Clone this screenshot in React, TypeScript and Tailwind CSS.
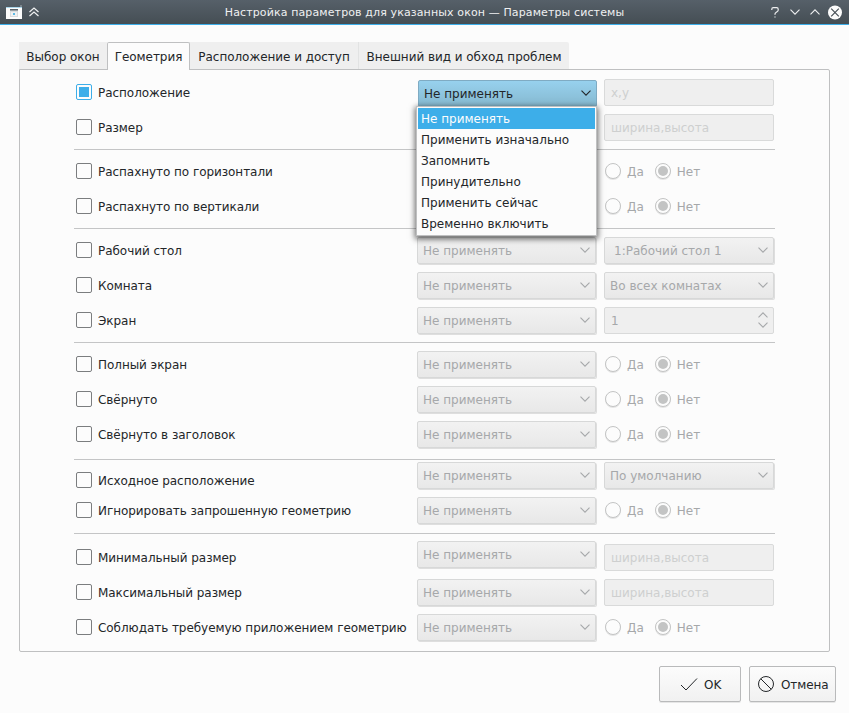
import React, { useState } from 'react';

type Value =
    | { kind: 'input'; placeholder: string }
    | { kind: 'combo'; text: string; indent?: boolean }
    | { kind: 'spin'; text: string }
    | { kind: 'radio' };

interface Rule {
    label: string;
    value: Value;
    labelClass?: string;
    comboClass?: string;
}

interface RuleGroup {
    className: string;
    rules: Rule[];
}

const TABS = [
    { label: 'Выбор окон', className: 'w-[88px]' },
    { label: 'Геометрия', className: 'w-[83px]' },
    { label: 'Расположение и доступ', className: 'w-[169px]' },
    { label: 'Внешний вид и обход проблем', className: 'w-[210px]' },
];

const POLICIES = ['Не применять', 'Применить изначально', 'Запомнить', 'Принудительно', 'Применить сейчас', 'Временно включить'];

const GROUPS: RuleGroup[] = [
    {
        className: 'pt-[9px] pb-2',
        rules: [
            { label: 'Расположение', value: { kind: 'input', placeholder: 'x,y' } },
            { label: 'Размер', value: { kind: 'input', placeholder: 'ширина,высота' } },
        ],
    },
    {
        className: 'border-t border-[#c4c5c6] py-2',
        rules: [
            { label: 'Распахнуто по горизонтали', value: { kind: 'radio' } },
            { label: 'Распахнуто по вертикали', value: { kind: 'radio' } },
        ],
    },
    {
        className: 'border-t border-[#c4c5c6] py-2',
        rules: [
            { label: 'Рабочий стол', value: { kind: 'combo', text: '1:Рабочий стол 1', indent: true } },
            { label: 'Комната', value: { kind: 'combo', text: 'Во всех комнатах' } },
            { label: 'Экран', value: { kind: 'spin', text: '1' } },
        ],
    },
    {
        className: 'border-t border-[#c4c5c6] pt-2 pb-[11px]',
        rules: [
            { label: 'Полный экран', value: { kind: 'radio' } },
            { label: 'Свёрнуто', value: { kind: 'radio' } },
            { label: 'Свёрнуто в заголовок', value: { kind: 'radio' } },
        ],
    },
    {
        className: 'border-t border-[#c4c5c6] pt-[2px] pb-[9px]',
        rules: [
            { label: 'Исходное расположение', value: { kind: 'combo', text: 'По умолчанию' }, labelClass: 'mt-[5px]' },
            { label: 'Игнорировать запрошенную геометрию', value: { kind: 'radio' } },
        ],
    },
    {
        className: 'border-t border-[#c4c5c6] pt-[10px]',
        rules: [
            { label: 'Минимальный размер', value: { kind: 'input', placeholder: 'ширина,высота' }, comboClass: '-mt-[3px]' },
            { label: 'Максимальный размер', value: { kind: 'input', placeholder: 'ширина,высота' } },
            { label: 'Соблюдать требуемую приложением геометрию', value: { kind: 'radio' } },
        ],
    },
];

function Chevron({ up = false, className = '' }: { up?: boolean; className?: string }) {
    return (
        <svg viewBox="0 0 10 6" className={`h-[6px] w-[10px] shrink-0 fill-none stroke-current ${className}`} aria-hidden>
            <path d={up ? 'M0.5 5.3 5 0.8 9.5 5.3' : 'M0.5 0.7 5 5.2 9.5 0.7'} strokeWidth="1.1" />
        </svg>
    );
}

function Combo({ text, className }: { text: string; className: string }) {
    return (
        <div
            className={`flex h-[27px] shrink-0 items-center justify-between rounded-[2px] border border-[#d7d8d8] bg-linear-to-b from-[#f2f2f2] to-[#e8e8e8] text-[#a6a8aa] shadow-[1px_1px_0_#dedede] ${className}`}
        >
            <span className="whitespace-pre">{text}</span>
            <Chevron className="mr-[5px] mb-[2px]" />
        </div>
    );
}

function Radio({ label, checked = false }: { label: string; checked?: boolean }) {
    return (
        <label className="flex items-center gap-[6px] text-[#a6a8aa]">
            <span className="mb-px flex size-4 items-center justify-center rounded-full border border-[#c3c4c4] bg-[#fcfcfc] shadow-[0_1px_0_#e4e4e4]">
                {checked && <span className="size-[10px] rounded-full bg-[#c3c4c4]" />}
            </span>
            <span>{label}</span>
        </label>
    );
}

function ValueField({ value }: { value: Value }) {
    if (value.kind === 'radio') {
        return (
            <div className="ml-px flex h-[27px] items-center gap-[11px]">
                <Radio label="Да" />
                <Radio label="Нет" checked />
            </div>
        );
    }
    if (value.kind === 'combo') {
        return <Combo text={value.text} className={value.indent ? 'w-[170px] pl-[9px]' : 'w-[170px] pl-[5px]'} />;
    }
    if (value.kind === 'spin') {
        return (
            <div className="flex h-[27px] w-[170px] items-center justify-between rounded-[2px] border border-[#d9dada] bg-[#efefef] pr-[5px] pl-[6px] text-[#a6a8aa]">
                <span>{value.text}</span>
                <span className="mb-px flex flex-col gap-[4px]">
                    <Chevron up />
                    <Chevron />
                </span>
            </div>
        );
    }
    return (
        <input
            disabled
            placeholder={value.placeholder}
            className="h-[27px] w-[170px] rounded-[2px] border border-[#d9dada] bg-[#efefef] px-[6px] placeholder:text-[#cecfcf]"
        />
    );
}

function PolicySelect() {
    const [open, setOpen] = useState(true);
    const [policy, setPolicy] = useState(POLICIES[0]);

    return (
        <div className="relative flex h-[27px] w-[179px] pt-px pl-px">
            <button
                type="button"
                onClick={() => setOpen((prev) => !prev)}
                className="flex h-[27px] w-[179px] shrink-0 items-center justify-between rounded-[2px] border border-[#7fabc3] bg-linear-to-b from-[#97d1ee] to-[#86b9d0] pl-[5px] text-left text-[#232629]"
            >
                <span>{policy}</span>
                <Chevron className="mr-[5px] mb-[2px]" />
            </button>
            {open && (
                <div className="absolute top-[27px] -left-px z-10 w-[181px] border border-[#bfc0c1] bg-[#fcfcfc] p-px shadow-[0_2px_6px_1px_rgba(0,0,0,0.6)]">
                    {POLICIES.map((p) => (
                        <button
                            key={p}
                            type="button"
                            onClick={() => {
                                setPolicy(p);
                                setOpen(false);
                            }}
                            className={`block h-[21px] w-full pt-px pl-[3px] text-left leading-[20px] ${
                                p === policy ? 'bg-[#3daee9] text-[#fcfcfc]' : 'text-[#232629]'
                            }`}
                        >
                            {p}
                        </button>
                    ))}
                </div>
            )}
        </div>
    );
}

function RuleRow({ rule, active }: { rule: Rule; active: boolean }) {
    return (
        <div className="flex h-[27px] items-start pl-[2px]">
            <label className={`flex h-[27px] w-[341px] shrink-0 items-center gap-[6px] ${rule.labelClass ?? ''}`}>
                <span
                    className={`mb-px flex size-4 shrink-0 items-center justify-center rounded-[2px] border ${
                        active ? 'border-[#3daee9]' : 'border-[#7b7d7f]'
                    }`}
                >
                    {active && <span className="size-[10px] bg-[#3daee9]" />}
                </span>
                <span className="tracking-[-0.05px] whitespace-nowrap">{rule.label}</span>
            </label>
            <div className="mr-2 w-[179px] shrink-0">
                {active ? <PolicySelect /> : <Combo text="Не применять" className={`w-[179px] pl-[5px] ${rule.comboClass ?? ''}`} />}
            </div>
            <ValueField value={rule.value} />
        </div>
    );
}

function TitleBar() {
    return (
        <header className="flex h-[25px] items-center border-b border-[#3daee9] bg-linear-to-b from-[#566069] to-[#454e54] text-[#eff0f1]">
            <svg viewBox="0 0 16 14" className="mb-px ml-[6px] h-[14px] w-4" aria-hidden>
                <rect x="14" width="2" height="2" fill="#7b858c" />
                <rect y="2" width="16" height="12" fill="#fcfcfc" />
                <rect y="2" width="16" height="1" fill="#a9d5ea" />
                <rect x="4" y="4" width="8" height="8" fill="#d9dcde" />
                <rect x="4" y="4" width="8" height="1.5" fill="#59636b" />
                <rect x="5" y="7" width="6" height="4" fill="#eff0f1" />
                <rect x="7" y="8" width="2" height="2" fill="#5bb9e4" />
            </svg>
            <svg viewBox="0 0 10 10" className="ml-[7px] size-[10px] fill-none stroke-current" aria-hidden>
                <path d="M0.5 5 5 1 9.5 5M0.5 9 5 5 9.5 9" strokeWidth="1.2" />
            </svg>
            <h1 className="flex-1 pt-px pl-[39px] text-center text-[11px] tracking-[0.12px]">
                Настройка параметров для указанных окон — Параметры системы
            </h1>
            <div className="mr-[6px] flex items-center">
                <svg viewBox="0 0 8 11" className="mr-[11px] h-[11px] w-2 fill-none stroke-current" aria-hidden>
                    <path d="M0.8 3V2.2Q0.8 0.7 2.3 0.7H5.7Q7.2 0.7 7.2 2.2V3Q7.2 4.2 6 4.8L5 5.4Q4 6 4 7V7.8M4 9.4V10.6" strokeWidth="1.2" />
                </svg>
                <Chevron className="mr-[10px]" />
                <Chevron up className="mr-[8px]" />
                <svg viewBox="0 0 15 15" className="size-[15px]" aria-hidden>
                    <circle cx="7" cy="7.5" r="7" fill="#fcfcfc" />
                    <path d="M3.2 3.7 10.8 11.3M10.8 3.7 3.2 11.3" stroke="#475057" strokeWidth="1.2" />
                </svg>
            </div>
        </header>
    );
}

export default function App(): React.ReactElement {
    return (
        <div className="h-[713px] w-[849px] overflow-hidden bg-[#fcfcfc] font-['DejaVu_Sans',sans-serif] text-[12px] leading-[16px] text-[#232629]">
            <TitleBar />
            <main className="px-[19px] pt-[17px]">
                <div className="flex h-[28px]">
                    {TABS.map((tab, i) => (
                        <div
                            key={tab.label}
                            className={`flex items-center justify-center tracking-[-0.04px] whitespace-nowrap ${tab.className} ${
                                i === 1
                                    ? 'z-[1] rounded-t-[2px] border border-b-0 border-[#bfc0c1] bg-[#fcfcfc]'
                                    : 'mb-px bg-[#efefef] pt-[2px]'
                            } ${i === 3 ? 'rounded-tr-[2px]' : ''} ${i === 2 ? 'border-r border-[#e2e3e3]' : ''}`}
                        >
                            {tab.label}
                        </div>
                    ))}
                </div>
                <section className="-mt-px h-[583px] w-[811px] rounded-b-[2px] rounded-tr-[2px] border border-[#bfc0c1] pl-[54px]">
                    {GROUPS.map((group, g) => (
                        <div key={g} className={`flex w-[701px] flex-col gap-2 ${group.className}`}>
                            {group.rules.map((rule, r) => (
                                <RuleRow key={rule.label} rule={rule} active={g === 0 && r === 0} />
                            ))}
                        </div>
                    ))}
                </section>
            </main>
            <footer className="mt-[14px] flex justify-end gap-2 pr-[13px]">
                <button
                    type="button"
                    className="flex h-9 w-[82px] items-center rounded-[2px] border border-[#b9babb] bg-linear-to-b from-[#fcfcfc] to-[#f1f1f1] pl-[20px] shadow-[0_1px_0_#e6e6e6]"
                >
                    <svg viewBox="0 0 18 14" className="h-[14px] w-[18px] fill-none stroke-[#232629]" aria-hidden>
                        <path d="M1 8 6 13 17 1.5" />
                    </svg>
                    <span className="mt-[2px] ml-[6px]">OK</span>
                </button>
                <button
                    type="button"
                    className="flex h-9 w-[87px] items-center rounded-[2px] border border-[#b9babb] bg-linear-to-b from-[#fcfcfc] to-[#f1f1f1] pl-[8px] shadow-[0_1px_0_#e6e6e6]"
                >
                    <svg viewBox="0 0 16 16" className="size-4 fill-none stroke-[#232629]" aria-hidden>
                        <circle cx="8" cy="8" r="7.5" />
                        <path d="M2.7 2.7 13.3 13.3" />
                    </svg>
                    <span className="mt-[2px] ml-[7px] tracking-[-0.1px]">Отмена</span>
                </button>
            </footer>
        </div>
    );
}
